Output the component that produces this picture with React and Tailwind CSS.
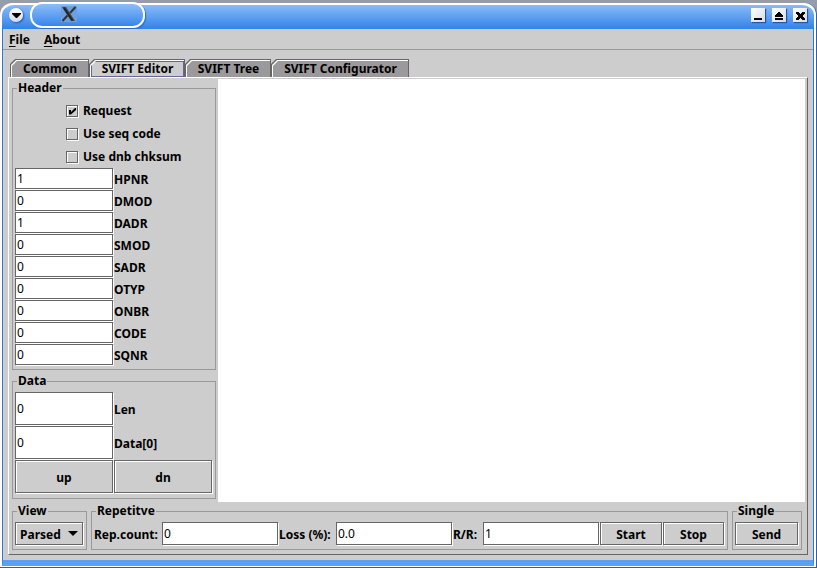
import React, { useState } from 'react';

const headerFields = [
  { name: 'HPNR', value: '1' },
  { name: 'DMOD', value: '0' },
  { name: 'DADR', value: '1' },
  { name: 'SMOD', value: '0' },
  { name: 'SADR', value: '0' },
  { name: 'OTYP', value: '0' },
  { name: 'ONBR', value: '0' },
  { name: 'CODE', value: '0' },
  { name: 'SQNR', value: '0' },
];

const dataFields = [
  { name: 'Len', value: '0' },
  { name: 'Data[0]', value: '0' },
];

const tabs = [
  { name: 'Common', width: 'w-[79px]' },
  { name: 'SVIFT Editor', width: 'w-[96px]' },
  { name: 'SVIFT Tree', width: 'w-[86px]' },
  { name: 'SVIFT Configurator', width: 'w-[138px]' },
];

const bevel = 'border border-[#666] shadow-[1px_1px_0_#fff,inset_1px_1px_0_#fff]';
const chamfer = '[clip-path:polygon(5px_0,100%_0,100%_100%,0_100%,0_5px)]';

const Group = ({ title, className = '', children }) => (
  <fieldset className={`min-w-0 border border-[#999] px-[2px] pt-[3px] ${className}`}>
    <legend className="ml-[2px] h-4 px-px leading-4">{title}</legend>
    {children}
  </fieldset>
);

const TextField = ({ id, value, className = '' }) => (
  <input
    id={id}
    type="text"
    defaultValue={value}
    className={`mr-px mb-px min-w-0 bg-white pl-px font-normal outline-none ${bevel} ${className}`}
  />
);

const Button = ({ className = '', children }) => (
  <button type="button" className={`mr-px mb-px min-w-0 bg-[#cdcdcd] pt-[2px] ${bevel} ${className}`}>
    {children}
  </button>
);

const FieldRow = ({ field, className }) => (
  <div className={`grid grid-cols-2 items-stretch ${className}`}>
    <TextField id={field.name} value={field.value} />
    <label htmlFor={field.name} className="self-center pt-[2px] leading-4">
      {field.name}
    </label>
  </div>
);

const CheckBox = ({ label, checked }) => (
  <label className="flex h-[23px] items-center gap-[5px] pl-[51px]">
    <span className="relative flex">
      <input
        type="checkbox"
        defaultChecked={checked}
        className={`peer size-3 appearance-none bg-[#cdcdcd] ${bevel}`}
      />
      <svg viewBox="0 0 12 12" className="pointer-events-none absolute inset-0 hidden size-3 peer-checked:block">
        <path d="M3 5h2v2l4-4h1v2L5 9.500H3z" fill="#000" />
      </svg>
    </span>
    <span className="leading-4">{label}</span>
  </label>
);

const Tab = ({ tab, active, onClick }) => (
  <button
    type="button"
    role="tab"
    aria-selected={active}
    onClick={onClick}
    className={`flex h-[18px] bg-[#666] pt-px pr-px pl-px ${tab.width} ${chamfer}`}
  >
    <span className={`flex h-full flex-1 bg-white pt-px pl-px ${chamfer}`}>
      <span
        className={`flex h-full flex-1 items-center justify-center whitespace-nowrap leading-4 ${chamfer} ${
          active ? 'bg-[#cdcdcd]' : 'bg-[#9b999b]'
        }`}
      >
        {active ? (
          <span className="flex h-full flex-1 items-center justify-center border border-[#666699]">{tab.name}</span>
        ) : (
          tab.name
        )}
      </span>
    </span>
  </button>
);

const WindowButton = ({ label, children }) => (
  <button
    type="button"
    aria-label={label}
    className="size-[14px] bg-gradient-to-br from-white to-[#d5dbe8] shadow-[1px_1px_1px_#1d58a8]"
  >
    <svg viewBox="0 0 14 14" className="size-[14px]" fill="#000">
      {children}
    </svg>
  </button>
);

const TitleBar = () => (
  <header className="flex h-[26px] shrink-0 items-start justify-between rounded-t-xl border-t-2 border-white bg-gradient-to-b from-[#88bbf8] to-[#2f82e8] pr-[7px] pl-[7px]">
    <div className="flex items-start gap-[7px]">
      <button
        type="button"
        aria-label="Window menu"
        className="mt-[3px] size-[14px] rounded-full bg-gradient-to-b from-white to-[#d3d9e6] shadow-[1px_1px_2px_#1d58a8]"
      >
        <svg viewBox="0 0 14 14" className="size-[14px]">
          <path d="M3 5h9v1L8 10H7L3 6z" fill="#000" />
        </svg>
      </button>
      <div className="-mt-[3px] h-[26px] w-[115px] rounded-xl border-2 border-white bg-gradient-to-b from-[#8cbdf9] to-[#3585ea] pt-[2px] pl-[29px] shadow-[1px_1px_1px_#2a6cc4]">
        <svg viewBox="0 0 16 16" className="size-4">
          <rect width="16" height="16" fill="#6c9fe0" />
          <path d="M1 1h4l9 14h-4z" fill="#444" />
          <path d="M3 2l8.500 12.500" stroke="#222" strokeWidth="1.500" />
          <path d="M14.500 1L9 7M6.500 9.500L1.500 15" stroke="#333" strokeWidth="2" />
        </svg>
      </div>
    </div>
    <div className="mt-[3px] flex gap-[7px]">
      <WindowButton label="Minimize">
        <path d="M3 10h8v2H3z" />
      </WindowButton>
      <WindowButton label="Maximize">
        <path d="M6 4h2v1h1v1h1v1h1v2H3V7h1V6h1V5h1zM3 10h8v2H3z" />
      </WindowButton>
      <WindowButton label="Close">
        <path d="M3 4h3v1h1v1h1V5h1V4h3v2h-1v1h-1v2h1v1h1v2H9v-1H8v-1H7v1H6v1H3v-2h1V9h1V7H4V6H3z" />
      </WindowButton>
    </div>
  </header>
);

const MenuBar = () => (
  <nav className="flex h-[21px] shrink-0 gap-[14px] border-b border-[#999] pt-[3px] pl-[6px] leading-4">
    <button type="button" className="h-4">
      <span className="underline underline-offset-2">F</span>ile
    </button>
    <button type="button" className="h-4">
      <span className="underline underline-offset-2">A</span>bout
    </button>
  </nav>
);

const Sidebar = () => (
  <aside className="flex w-[209px] shrink-0 flex-col gap-[3px] pt-px pr-[2px] pl-[3px]">
    <Group title="Header" className="pb-[3px]">
      <CheckBox label="Request" checked />
      <CheckBox label="Use seq code" />
      <CheckBox label="Use dnb chksum" />
      {headerFields.map((field) => (
        <FieldRow key={field.name} field={field} className="h-[22px]" />
      ))}
    </Group>
    <Group title="Data" className="pb-[4px]">
      {dataFields.map((field) => (
        <FieldRow key={field.name} field={field} className="h-[34px]" />
      ))}
      <div className="grid h-[34px] grid-cols-2">
        <Button>up</Button>
        <Button>dn</Button>
      </div>
    </Group>
  </aside>
);

const BottomBar = () => (
  <footer className="flex shrink-0 gap-1 pt-px pr-[5px] pb-1 pl-[3px]">
    <Group title="View" className="w-[75px] pb-[3px]">
      <div className="relative flex h-6">
        <select
          aria-label="View"
          className={`mr-px mb-px min-w-0 flex-1 appearance-none bg-[#cdcdcd] pt-[2px] pl-1 outline-none ${bevel}`}
        >
          <option>Parsed</option>
        </select>
        <svg viewBox="0 0 10 5" className="pointer-events-none absolute top-[9px] right-[6px] h-[5px] w-[10px]">
          <path d="M0 0h10L5 5z" fill="#000" />
        </svg>
      </div>
    </Group>
    <Group title="Repetitve" className="flex-1 pb-[3px]">
      <div className="flex h-6">
        <label htmlFor="count" className="w-[68px] self-center whitespace-nowrap pt-[2px] leading-4">
          Rep.count:
        </label>
        <TextField id="count" value="0" className="flex-1" />
        <label htmlFor="loss" className="w-[57px] self-center whitespace-nowrap pt-[2px] leading-4">
          Loss (%):
        </label>
        <TextField id="loss" value="0.0" className="flex-1" />
        <label htmlFor="rr" className="w-[30px] self-center whitespace-nowrap pt-[2px] leading-4">
          R/R:
        </label>
        <TextField id="rr" value="1" className="flex-1" />
        <Button className="w-[62px]">Start</Button>
        <Button className="w-[61px]">Stop</Button>
      </div>
    </Group>
    <Group title="Single" className="w-[70px] pb-[3px]">
      <div className="flex h-6">
        <Button className="flex-1">Send</Button>
      </div>
    </Group>
  </footer>
);

const App = () => {
  const [activeTab, setActiveTab] = useState('SVIFT Editor');

  return (
    <div className="flex min-h-screen flex-col bg-[#969ca8] pt-[3px] font-['Noto_Sans','Open_Sans',sans-serif] text-[12px] font-bold text-black">
      <div className="flex flex-1 flex-col rounded-t-xl border-r border-b border-[#2463b0] bg-white pr-[2px] pb-px pl-[2px]">
        <TitleBar />
        <div className="flex flex-1 flex-col border-x border-b-[6px] border-x-[#2f7ad6] border-b-[#5a9ff2] bg-[#cdcdcd]">
          <MenuBar />
          <main className="flex flex-1 flex-col pt-[9px] pr-[5px] pb-[5px] pl-[5px]">
            <div role="tablist" className="flex pl-[2px]">
              {tabs.map((tab) => (
                <Tab
                  key={tab.name}
                  tab={tab}
                  active={tab.name === activeTab}
                  onClick={() => setActiveTab(tab.name)}
                />
              ))}
            </div>
            <section className="flex flex-1 flex-col border border-t-white border-r-[#666] border-b-[#666] border-l-white pt-px">
              <div className="flex flex-1">
                <Sidebar />
                <div className="mr-[2px] flex-1 bg-white"></div>
              </div>
              <BottomBar />
            </section>
          </main>
        </div>
      </div>
    </div>
  );
};

export default App;
